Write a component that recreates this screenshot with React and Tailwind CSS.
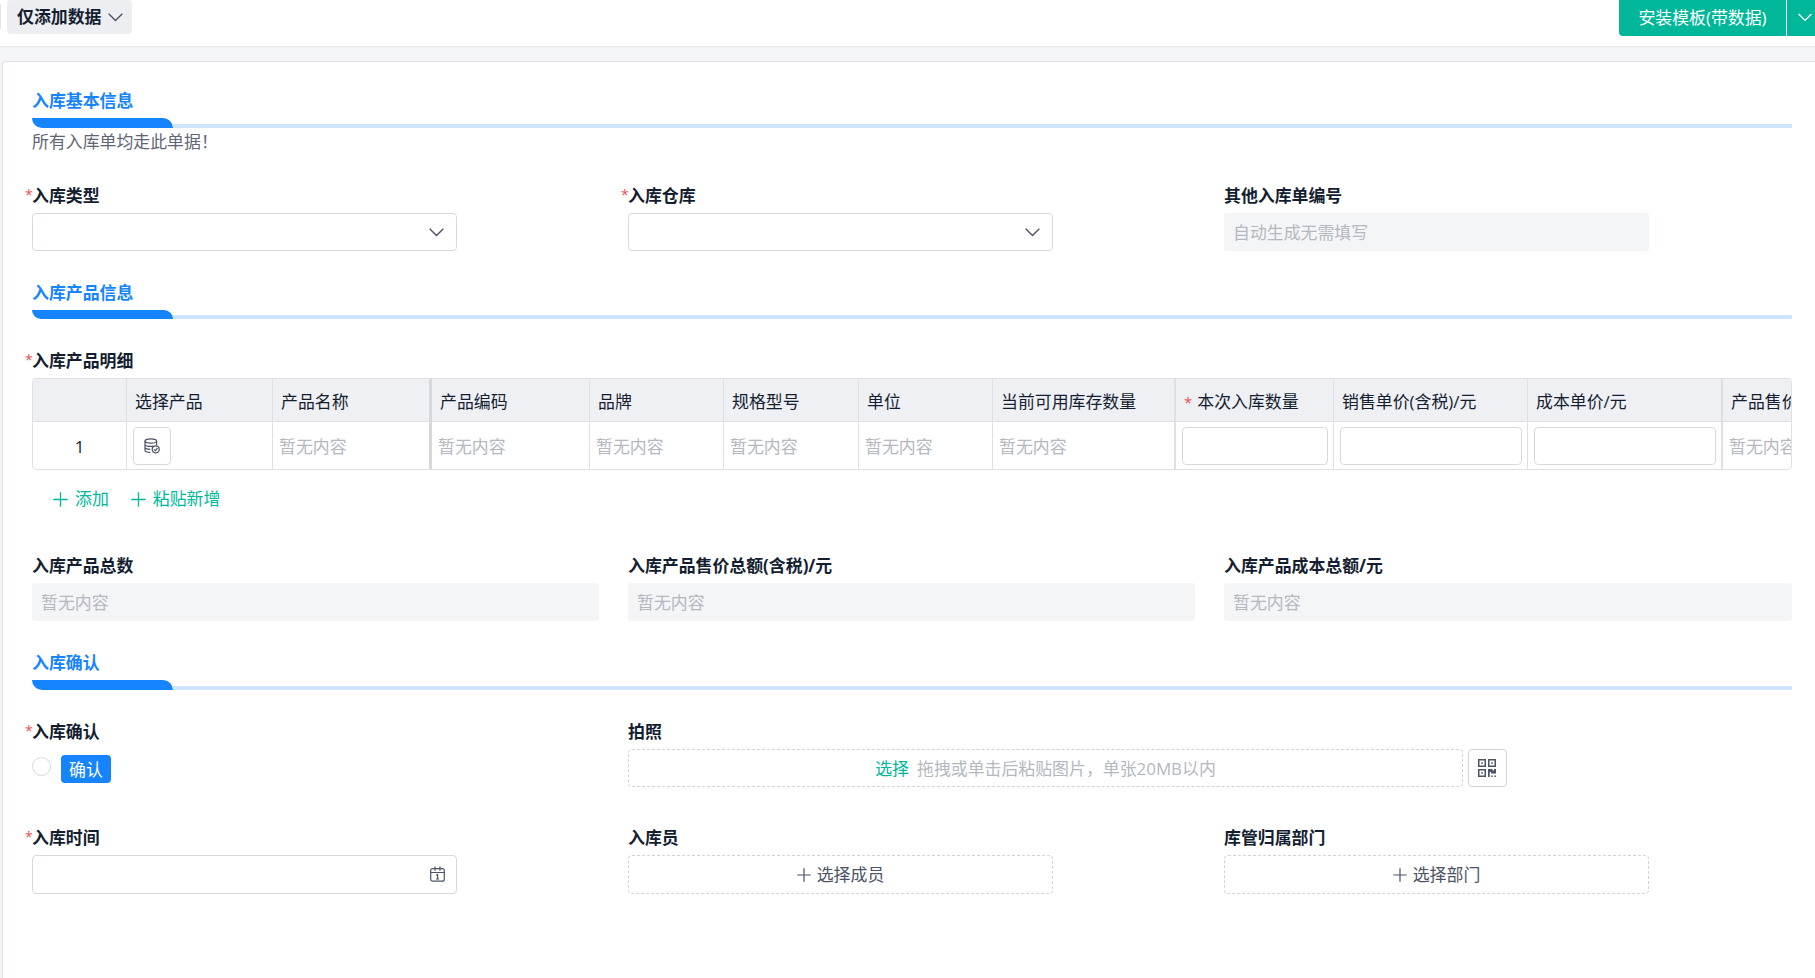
import React from 'react';

const EMPTY = '暂无内容';

const columns = [
  { title: '', kind: 'index', width: 'w-[94px]', line: 'border-r border-[#dfe0e3]' },
  { title: '选择产品', kind: 'picker', width: 'w-[146px]', line: 'border-r border-[#dfe0e3]' },
  { title: '产品名称', kind: 'text', width: 'w-[159px]', line: 'border-r-[3px] border-[#d7d8dd]' },
  { title: '产品编码', kind: 'text', width: 'w-[158px]', line: 'border-r border-[#dfe0e3]' },
  { title: '品牌', kind: 'text', width: 'w-[134px]', line: 'border-r border-[#dfe0e3]' },
  { title: '规格型号', kind: 'text', width: 'w-[135px]', line: 'border-r border-[#dfe0e3]' },
  { title: '单位', kind: 'text', width: 'w-[134px]', line: 'border-r border-[#dfe0e3]' },
  { title: '当前可用库存数量', kind: 'text', width: 'w-[183px]', line: 'border-r-2 border-[#dfe0e3]' },
  { title: '本次入库数量', kind: 'input', required: true, width: 'w-[158px]', line: 'border-r border-[#dfe0e3]' },
  { title: '销售单价(含税)/元', kind: 'input', width: 'w-[194px]', line: 'border-r border-[#dfe0e3]' },
  { title: '成本单价/元', kind: 'input', width: 'w-[195px]', line: 'border-r-2 border-[#dfe0e3]' },
  { title: '产品售价', kind: 'text', width: 'w-[158px]', line: '' }
];

const Chevron = ({ className }) => (
  <svg className={className} viewBox="0 0 15 9" fill="none" stroke="currentColor" strokeWidth="1.4">
    <path d="M0.7 0.8L7.5 7.6L14.3 0.8" />
  </svg>
);

const Plus = ({ className }) => (
  <svg className={className} viewBox="0 0 15 15" fill="none" stroke="currentColor" strokeWidth="1.3">
    <path d="M7.5 0.3V14.7M0.3 7.5H14.7" />
  </svg>
);

const DatabaseIcon = () => (
  <svg className="h-4 w-4" viewBox="0 0 16 16" fill="none" stroke="currentColor" strokeWidth="1.2">
    <ellipse cx="6.8" cy="3" rx="5.8" ry="2.2" />
    <path d="M1 3v9.2c0 1.2 2.2 2.1 5.4 2.2M12.6 3v4M1 6.2c0 1.2 2.6 2.2 5.8 2.2 .9 0 1.7-.1 2.4-.2M1 9.3c0 1.1 2.2 2 5.2 2.1" />
    <circle cx="11.7" cy="11.3" r="3.5" />
    <path d="M10 11.3l1.3 1.3 2.2-2.4" />
  </svg>
);

const QrIcon = () => (
  <svg className="mr-px mb-px h-[18px] w-[18px]" viewBox="0 0 18 18" fill="currentColor">
    <path fillRule="evenodd" d="M0 0h8v8H0zM1.5 1.5v5h5v-5zM10 0h8v8h-8zM11.5 1.5v5h5v-5zM0 10h8v8H0zM1.5 11.5v5h5v-5z" />
    <path d="M3.2 3.2h1.6v1.6H3.2zM13.2 3.2h1.6v1.6h-1.6zM3.2 13.2h1.6v1.6H3.2zM10 10h4.5v1.5H16V10h2v4.5h-5V13h-1.3v5H10zM13.3 16.5h1.5V18h-1.5zM16.5 16.5H18V18h-1.5z" />
  </svg>
);

const CalendarIcon = () => (
  <svg className="mb-px h-4 w-[15px]" viewBox="0 0 15 16" fill="none" stroke="currentColor" strokeWidth="1.2">
    <rect x="0.7" y="2.6" width="13.6" height="12.6" rx="2" />
    <path d="M0.7 6.5h13.6M5 0.5v4.3M10 0.5v4.3M6.2 9.2l1.4-.7v4.5M6 13h3.2" />
  </svg>
);

const SectionHead = ({ title, bar = 'h-2.5' }) => (
  <div>
    <div className="leading-6 font-bold text-[#1684ff]">{title}</div>
    <div className="mt-[5px] flex items-end">
      <div className={`w-[141px] rounded-tr-[10px] rounded-bl-[10px] bg-[#1684ff] ${bar}`} />
      <div className="h-1 flex-1 bg-[#cfe5ff]" />
    </div>
  </div>
);

const Label = ({ children, required }) => (
  <div className="relative leading-6 font-bold text-[#141e31]">
    {required && <span className="absolute -left-[7px] -top-px text-[14px] font-normal text-[#f04f4f]">*</span>}
    {children}
  </div>
);

const Field = ({ label, required, className = '', children }) => (
  <div className={className}>
    <Label required={required}>{label}</Label>
    <div className="mt-[5px]">{children}</div>
  </div>
);

// three equal columns, the last one takes the spare pixel
const Row = ({ className, children }) => (
  <div className={`grid grid-cols-[567px_567px_568px] gap-x-[29px] ${className}`}>{children}</div>
);

const Select = () => (
  <div className="flex h-[38px] w-[425px] items-center justify-end rounded border border-[#d7d9dc] pr-3 text-[#4c5366]">
    <Chevron className="h-[9px] w-[15px]" />
  </div>
);

const ReadOnly = ({ children, className = '' }) => (
  <div className={`flex h-[38px] items-center rounded-[3px] bg-[#f4f5f7] pt-0.5 pl-[9px] text-[#b4b8c0] ${className}`}>{children}</div>
);

const PickButton = ({ children }) => (
  <div className="flex h-[39px] w-[425px] items-center justify-center gap-1.5 rounded border border-dashed border-[#d2d4d8] text-[#4c5366]">
    <Plus className="h-3.5 w-3.5" />
    {children}
  </div>
);

const Cell = ({ kind }) => {
  if (kind === 'index') return <span className="w-full pt-0.5 text-center text-[#141e31]">1</span>;
  if (kind === 'picker') {
    return (
      <div className="ml-1.5 flex h-[38px] w-[38px] items-center justify-center rounded border border-[#d7d9dc] text-[#4c5366]">
        <DatabaseIcon />
      </div>
    );
  }
  if (kind === 'input') return <div className="mr-[5px] ml-1.5 h-[38px] flex-1 rounded border border-[#d7d9dc]" />;
  return <span className="pt-0.5 pl-1.5 text-[#b4b8c0]">{EMPTY}</span>;
};

const ProductTable = () => (
  <div className="mt-[5px] h-[92px] overflow-hidden rounded border border-[#dfe0e3]">
    <div className="flex w-[1850px]">
      {columns.map((col) => (
        <div key={col.title} className={`shrink-0 ${col.width} ${col.line}`}>
          <div className="flex h-[43px] items-center border-b border-[#dfe0e3] bg-[#eff0f4] pt-[3px] pl-2 whitespace-nowrap text-[#141e31]">
            {col.required && <span className="mr-[5px] text-[15px] text-[#f04f4f]">*</span>}
            {col.title}
          </div>
          <div className="flex h-[47px] items-center">
            <Cell kind={col.kind} />
          </div>
        </div>
      ))}
    </div>
  </div>
);

const TopBar = () => (
  <header className="flex h-[47px] items-start justify-between border-b border-[#e4e6e9] bg-white">
    <div className="flex items-start">
      <div className="mt-1 h-[25px] w-px bg-[#e4e5e9]" />
      <div className="ml-1.5 flex h-[34px] w-[125px] items-center gap-[7px] rounded bg-[#edeef2] pl-2.5 font-bold text-[#141e31]">
        仅添加数据
        <Chevron className="h-[9px] w-[15px] text-[#4c5366]" />
      </div>
    </div>
    <div className="flex h-9 text-white">
      <div className="flex w-[167px] items-center justify-center rounded-bl bg-[#00b899]">安装模板(带数据)</div>
      <div className="ml-px flex w-7 items-center bg-[#00b899] pb-px pl-[11px]">
        <Chevron className="h-[9px] w-3.5" />
      </div>
    </div>
  </header>
);

const App = () => {
  return (
    <div className="h-[978px] w-[1815px] overflow-hidden bg-[#f4f5f7] font-['Open_Sans','Noto_Sans_CJK_SC',sans-serif] text-[16.9px] leading-6 font-normal">
      <TopBar />
      <main className="mt-3.5 ml-0.5 h-[917px] rounded-tl border-t border-l border-[#dfe1e5] bg-white pt-[27px] pr-[23px] pl-[29px]">
        <SectionHead title="入库基本信息" />
        <div className="mt-0.5 text-[#5f6675]">所有入库单均走此单据！</div>

        <Row className="mt-[30px]">
          <Field label="入库类型" required><Select /></Field>
          <Field label="入库仓库" required><Select /></Field>
          <Field label="其他入库单编号"><ReadOnly className="w-[425px]">自动生成无需填写</ReadOnly></Field>
        </Row>

        <div className="mt-[30px]">
          <SectionHead title="入库产品信息" bar="h-[9px]" />
        </div>

        <div className="mt-[30px]">
          <Label required>入库产品明细</Label>
          <ProductTable />
          <div className="mt-[17px] flex items-center pl-[21px] text-[#00b899]">
            <Plus className="mr-[7px] h-[15px] w-[15px]" />
            添加
            <Plus className="mr-[7px] ml-[22px] h-[15px] w-[15px]" />
            粘贴新增
          </div>
        </div>

        <Row className="mt-[43px]">
          <Field label="入库产品总数"><ReadOnly>{EMPTY}</ReadOnly></Field>
          <Field label="入库产品售价总额(含税)/元"><ReadOnly>{EMPTY}</ReadOnly></Field>
          <Field label="入库产品成本总额/元"><ReadOnly>{EMPTY}</ReadOnly></Field>
        </Row>

        <div className="mt-[30px]">
          <SectionHead title="入库确认" />
        </div>

        <Row className="mt-[30px]">
          <Field label="入库确认" required>
            <div className="flex items-start pt-1.5">
              <div className="mt-0.5 h-[19px] w-[19px] rounded-full border border-[#d7d9dc]" />
              <div className="ml-2.5 flex h-7 w-[50px] items-center justify-center rounded bg-[#1684ff] pt-px text-white">确认</div>
            </div>
          </Field>
          <Field label="拍照" className="col-span-2">
            <div className="flex gap-[5px]">
              <div className="flex h-[38px] w-[835px] items-center justify-center gap-2 rounded border border-dashed border-[#d2d4d8] pt-0.5 text-[#b4b8c0]">
                <span className="text-[#00b899]">选择</span>
                <span>拖拽或单击后粘贴图片，单张20MB以内</span>
              </div>
              <div className="flex h-[38px] w-[39px] items-center justify-center rounded border border-[#d2d4d8] text-[#4c5366]">
                <QrIcon />
              </div>
            </div>
          </Field>
        </Row>

        <Row className="mt-[39px]">
          <Field label="入库时间" required>
            <div className="flex h-[39px] w-[425px] items-center justify-end rounded border border-[#d7d9dc] pr-[11px] text-[#4c5366]">
              <CalendarIcon />
            </div>
          </Field>
          <Field label="入库员"><PickButton>选择成员</PickButton></Field>
          <Field label="库管归属部门"><PickButton>选择部门</PickButton></Field>
        </Row>
      </main>
    </div>
  );
};

export default App;
